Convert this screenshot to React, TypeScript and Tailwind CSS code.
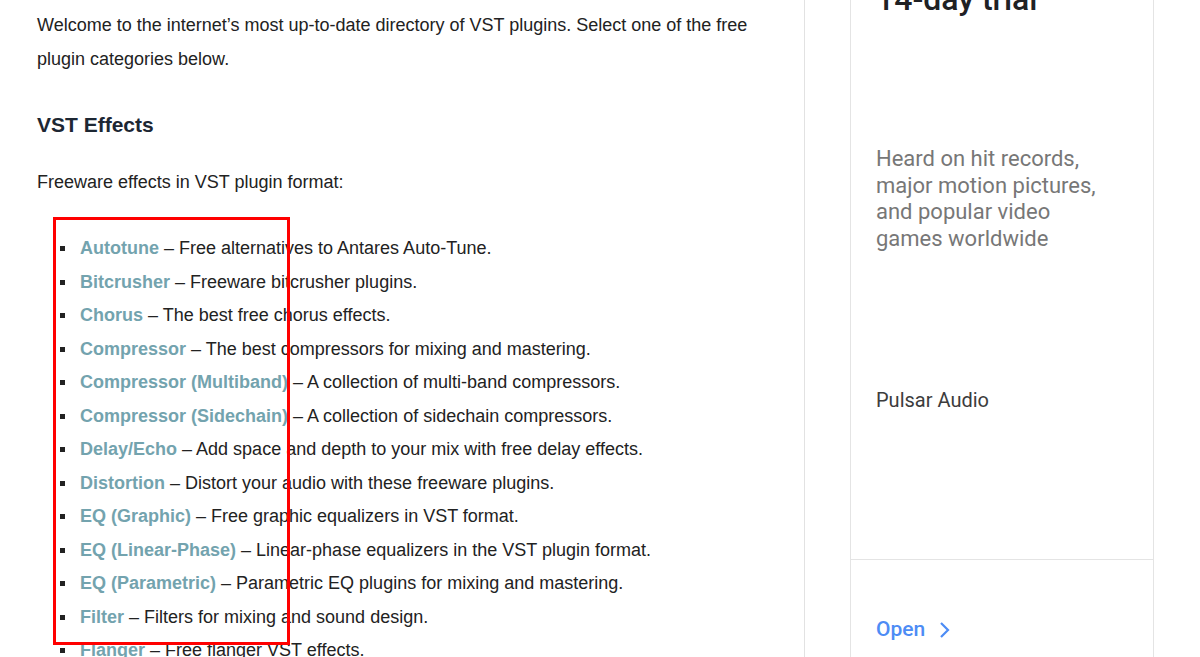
const EFFECTS = [
  { name: 'Autotune', desc: 'Free alternatives to Antares Auto-Tune.' },
  { name: 'Bitcrusher', desc: 'Freeware bitcrusher plugins.' },
  { name: 'Chorus', desc: 'The best free chorus effects.' },
  { name: 'Compressor', desc: 'The best compressors for mixing and mastering.' },
  { name: 'Compressor (Multiband)', desc: 'A collection of multi-band compressors.' },
  { name: 'Compressor (Sidechain)', desc: 'A collection of sidechain compressors.' },
  { name: 'Delay/Echo', desc: 'Add space and depth to your mix with free delay effects.' },
  { name: 'Distortion', desc: 'Distort your audio with these freeware plugins.' },
  { name: 'EQ (Graphic)', desc: 'Free graphic equalizers in VST format.' },
  { name: 'EQ (Linear-Phase)', desc: 'Linear-phase equalizers in the VST plugin format.' },
  { name: 'EQ (Parametric)', desc: 'Parametric EQ plugins for mixing and mastering.' },
  { name: 'Filter', desc: 'Filters for mixing and sound design.' },
  { name: 'Flanger', desc: 'Free flanger VST effects.' },
]

export default function App() {
  return (
    <div className="h-[657px] overflow-hidden bg-white flex">
      {/* Main article column */}
      <main className="relative w-[805px] shrink-0 border-r border-[#e2e2e2] pl-[37px] pr-[36px] pt-[8px] font-['Liberation_Sans',Arial,sans-serif] text-[18px] text-[#222]">
        <p className="leading-[34px]">
          Welcome to the internet’s most up-to-date directory of VST plugins. Select one of the free plugin
          categories below.
        </p>
        <h2 className="mt-[35px] text-[21px] leading-[28px] font-bold text-[#1d2733]">VST Effects</h2>
        <p className="mt-[26px] leading-[34px]">Freeware effects in VST plugin format:</p>
        <ul className="mt-[33px] pl-[23px]">
          {EFFECTS.map((item) => (
            <li key={item.name} className="flex items-center leading-[33.5px]">
              <span className="w-[5px] h-[5px] bg-[#222] mr-[15px] shrink-0" />
              <span>
                <a className="font-bold text-[#73a3ae]">{item.name}</a> – {item.desc}
              </span>
            </li>
          ))}
        </ul>

        {/* Annotation box */}
        <div className="absolute left-[53px] top-[217px] w-[237px] h-[428px] border-[3px] border-[#f00]" />
      </main>

      {/* Sidebar ad */}
      <aside className="pl-[45px]">
        <div className="w-[304px] h-[700px] -mt-[20px] border-x border-[#e4e4e4] flex flex-col font-['Roboto','Open_Sans',sans-serif]">
          <div className="px-[25px] h-[579px] shrink-0 flex flex-col">
            <h3 className="text-[32px] leading-[38px] font-medium text-[#202124]">14-day trial</h3>
            <p className="mt-[128px] text-[22px] leading-[26.5px] text-[#777]">
              Heard on hit records,
              <br />
              major motion pictures,
              <br />
              and popular video
              <br />
              games worldwide
            </p>
            <p className="mt-[135px] text-[20px] leading-[26px] text-[#3c3c3c]">Pulsar Audio</p>
          </div>
          <div className="border-t border-[#e4e4e4] px-[25px] pt-[54px]">
            <a className="flex items-center gap-[14px] text-[21px] font-medium text-[#4d8cf5]">
              Open
              <svg width="12" height="18" viewBox="0 0 12 18" fill="none" stroke="#4d8cf5" strokeWidth="2.2">
                <path d="M2 2l7 7-7 7" />
              </svg>
            </a>
          </div>
        </div>
      </aside>
    </div>
  )
}
